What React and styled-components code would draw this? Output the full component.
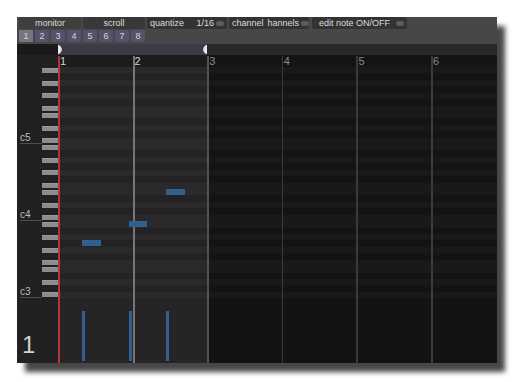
import React from "react";
import styled, { createGlobalStyle } from "styled-components";

const GlobalStyle = createGlobalStyle`
  html, body { margin: 0; padding: 0; background: #ffffff; }
  body { font-family: "Liberation Sans", Arial, sans-serif; }
`;

const BAR_W = 74.6;
const LOOP_W = 149;
const ROWS = 36;
const TOP_PITCH = 83;
const BLACK = new Set([1, 3, 6, 8, 10]);

const Stage = styled.div`
  width: 515px;
  height: 382px;
  padding: 17px 0 0 17px;
  box-sizing: border-box;
`;

const Window = styled.div`
  width: 480px;
  height: 346px;
  background: #474747;
  box-shadow: 8px 9px 5px rgba(0, 0, 0, 0.72);
  display: flex;
  flex-direction: column;
  overflow: hidden;
`;

const Toolbar = styled.div`
  display: flex;
  height: 12px;
  padding: 0 2px;
  gap: 2px;
`;

const ToolButton = styled.div`
  width: ${(p) => p.$w}px;
  margin-left: ${(p) => p.$ml || 0}px;
  height: 12px;
  background: ${(p) => p.$bg || "#3a3a3a"};
  border-radius: 2px;
  display: flex;
  align-items: center;
  justify-content: ${(p) => (p.$center ? "center" : "space-between")};
  padding: 0 3px;
  box-sizing: border-box;
  color: #dcdcdc;
  font-size: 9px;
  line-height: 12px;
  white-space: nowrap;
`;

const ToolText = styled.span`
  flex: ${(p) => (p.$grow ? 1 : "none")};
  text-align: ${(p) => p.$align || "left"};
  padding-right: ${(p) => p.$pr || 0}px;
`;

const Toggle = styled.span`
  width: 8px;
  height: 5px;
  border-radius: 3px;
  background: #5c5c5c;
  flex: none;
  margin-left: 2px;
`;

const Tabs = styled.div`
  display: flex;
  gap: 2px;
  height: 12px;
  margin-top: 1px;
  padding-left: 2px;
`;

const Tab = styled.div`
  width: 14px;
  height: 12px;
  border-radius: 1px;
  background: ${(p) => (p.$active ? "#7a7482" : "#57516a")};
  color: #d8d4e0;
  font-size: 9px;
  line-height: 12px;
  text-align: center;
`;

const Editor = styled.div`
  flex: 1;
  margin-top: 2px;
  display: grid;
  grid-template-columns: 41px 439px;
  grid-template-rows: 11px 12px 231px 1fr;
  background: #212121;
`;

const LoopBar = styled.div`
  display: flex;
  background: #282828;
`;

const LoopRange = styled.div`
  width: ${LOOP_W}px;
  background: #3e3a47;
  display: flex;
  justify-content: space-between;
  align-items: center;
`;

const Corner = styled.div`
  background: ${(p) => p.$bg || "#212121"};
`;

const Ruler = styled.div`
  position: relative;
  background: #141414;
  display: flex;
`;

const RulerLoop = styled.div`
  width: ${LOOP_W}px;
  background: #1c1c1c;
`;

const BarNum = styled.span`
  position: absolute;
  top: 1px;
  left: ${(p) => p.$x + 2}px;
  font-size: 11px;
  line-height: 11px;
  color: ${(p) => (p.$inLoop ? "#d6d6d6" : "#8a8a8a")};
`;

const Keys = styled.div`
  display: flex;
  flex-direction: column;
  background: #212121;
`;

const KeyRow = styled.div`
  flex: 1;
  position: relative;
  display: flex;
  justify-content: flex-end;
  align-items: center;
`;

const WhiteKey = styled.div`
  width: 16px;
  height: 5px;
  background: #8c8c8c;
  border-top: 1px solid #9a9a9a;
  box-sizing: border-box;
`;

const OctaveLabel = styled.span`
  position: absolute;
  left: 3px;
  bottom: 0px;
  width: 22px;
  font-size: 10px;
  line-height: 10px;
  color: #bdbdbd;
  border-bottom: 1px solid #4e4e4e;
`;

const Grid = styled.div`
  position: relative;
  display: flex;
  flex-direction: column;
`;

const GridRow = styled.div`
  flex: 1;
  display: flex;
`;

const RowLoop = styled.div`
  width: ${LOOP_W}px;
  background: ${(p) => (p.$black ? "#232323" : "#2a2a2a")};
`;

const RowRest = styled.div`
  flex: 1;
  background: ${(p) => (p.$black ? "#131313" : "#191919")};
`;

const lineColor = (k) =>
  k === "red" ? "#b2343c" : k === "loop" ? "#767676" : k === "edge" ? "#525252" : "#3a3a3a";

const BarLine = styled.div`
  position: absolute;
  top: ${(p) => p.$top || 0}px;
  bottom: 0;
  left: ${(p) => p.$x}px;
  width: ${(p) => (p.$kind === "loop" ? 2 : 1.5)}px;
  background: ${(p) => lineColor(p.$kind)};
`;

const Note = styled.div`
  position: absolute;
  left: ${(p) => p.$x}px;
  top: ${(p) => (p.$row * 231) / ROWS}px;
  width: 18.5px;
  height: ${231 / ROWS - 0.6}px;
  background: #31608f;
`;

const Velocity = styled.div`
  position: relative;
  display: flex;
  background: #131313;
`;

const VelLoop = styled.div`
  width: ${LOOP_W}px;
  background: #252525;
`;

const VelBar = styled.div`
  position: absolute;
  left: ${(p) => p.$x}px;
  bottom: 2px;
  width: 3px;
  height: ${(p) => p.$h}px;
  background: #31608f;
`;

const ChannelCorner = styled.div`
  background: #212121;
  display: flex;
  align-items: flex-end;
  padding: 0 0 6px 5px;
  color: #d2d2d2;
  font-size: 24px;
  line-height: 24px;
`;

const notes = [
  { x: 24, pitch: 56 },
  { x: 70.5, pitch: 59 },
  { x: 108, pitch: 64 },
];

const kindOf = (i) => (i === 0 ? "red" : i === 1 ? "loop" : i === 2 ? "edge" : "dim");

function Marker({ dir }) {
  return (
    <svg width="4" height="9" viewBox="0 0 4 9">
      {dir === "right" ? (
        <path d="M0 0 L1 0 Q4 2 4 4.5 Q4 7 1 9 L0 9 Z" fill="#e6e6e6" />
      ) : (
        <path d="M4 0 L3 0 Q0 2 0 4.5 Q0 7 3 9 L4 9 Z" fill="#e6e6e6" />
      )}
    </svg>
  );
}

export default function App() {
  const rows = Array.from({ length: ROWS }, (_, i) => {
    const pitch = TOP_PITCH - i;
    return { pitch, black: BLACK.has(pitch % 12), c: pitch % 12 === 0 ? Math.floor(pitch / 12) - 1 : null };
  });
  const bars = [0, 1, 2, 3, 4, 5].map((b) => b * BAR_W);

  return (
    <>
      <GlobalStyle />
      <Stage>
        <Window>
          <Toolbar>
            <ToolButton $w={62} $bg="#3e3e3e" $center>monitor</ToolButton>
            <ToolButton $w={62} $bg="#383838" $center>scroll</ToolButton>
            <ToolButton $w={80} $bg="#333333">
              <ToolText $grow>quantize</ToolText>
              <ToolText>1/16</ToolText>
              <Toggle />
            </ToolButton>
            <ToolButton $w={80} $bg="#333333">
              <ToolText $pr={4}>channel</ToolText>
              <ToolText $grow>hannels</ToolText>
              <Toggle />
            </ToolButton>
            <ToolButton $w={95} $ml={1} $bg="#333333">
              <ToolText $grow $align="center">edit note ON/OFF</ToolText>
              <Toggle />
            </ToolButton>
          </Toolbar>
          <Tabs>
            {[1, 2, 3, 4, 5, 6, 7, 8].map((n) => (
              <Tab key={n} $active={n === 1}>{n}</Tab>
            ))}
          </Tabs>
          <Editor>
            <Corner $bg="#1a1a1a" />
            <LoopBar>
              <LoopRange>
                <Marker dir="right" />
                <Marker dir="left" />
              </LoopRange>
            </LoopBar>
            <Corner />
            <Ruler>
              <RulerLoop />
              {bars.map((x, i) => (
                <BarNum key={i} $x={x} $inLoop={i < 2}>{i + 1}</BarNum>
              ))}
              {bars.map((x, i) => (
                <BarLine key={i} $x={x} $top={1} $kind={kindOf(i)} />
              ))}
            </Ruler>
            <Keys>
              {rows.map((r) => (
                <KeyRow key={r.pitch}>
                  {r.c !== null && <OctaveLabel>c{r.c}</OctaveLabel>}
                  {!r.black && <WhiteKey />}
                </KeyRow>
              ))}
            </Keys>
            <Grid>
              {rows.map((r) => (
                <GridRow key={r.pitch}>
                  <RowLoop $black={r.black} />
                  <RowRest $black={r.black} />
                </GridRow>
              ))}
              {bars.map((x, i) => (
                <BarLine key={i} $x={x} $kind={kindOf(i)} />
              ))}
              {notes.map((n, i) => (
                <Note key={i} $x={n.x} $row={TOP_PITCH - n.pitch} />
              ))}
            </Grid>
            <ChannelCorner>1</ChannelCorner>
            <Velocity>
              <VelLoop />
              {bars.map((x, i) => (
                <BarLine key={i} $x={x} $kind={kindOf(i)} />
              ))}
              {notes.map((n, i) => (
                <VelBar key={i} $x={n.x} $h={50} />
              ))}
            </Velocity>
          </Editor>
        </Window>
      </Stage>
    </>
  );
}
